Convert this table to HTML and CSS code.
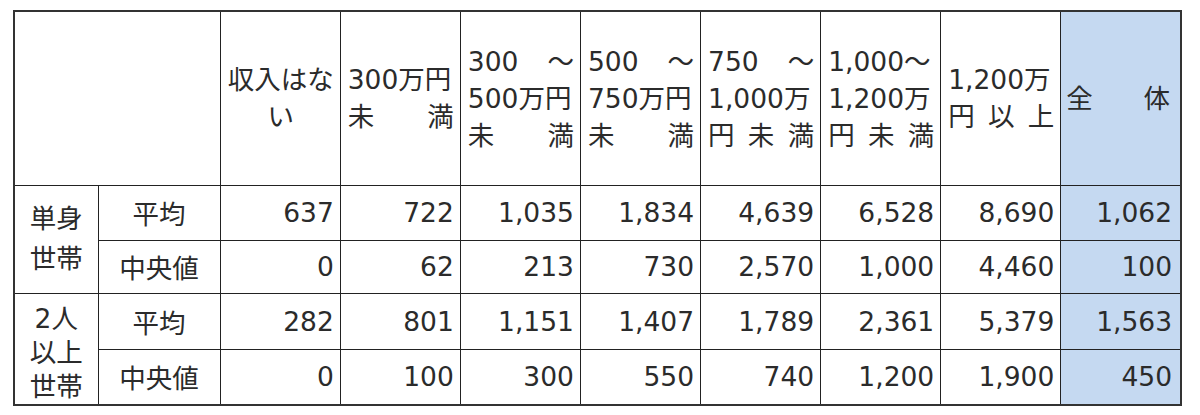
FILE: index.html
```html
<!DOCTYPE html>
<html lang="ja">
<head>
<meta charset="utf-8">
<link rel="stylesheet" href="styles.css">
</head>
<body>
<table class="tbl">
  <colgroup>
    <col class="c-rh"><col class="c-lb">
    <col class="c-d"><col class="c-d"><col class="c-d"><col class="c-d">
    <col class="c-d"><col class="c-d"><col class="c-d"><col class="c-d">
  </colgroup>
  <thead>
    <tr class="hrow">
      <th colspan="2" class="blank"></th>
      <th class="hc center"><div class="ln">収入はな</div><div class="ln">い</div></th>
      <th class="hc"><div class="ln dist"><span>300万円</span></div><div class="ln dist"><span>未</span><span>満</span></div></th>
      <th class="hc"><div class="ln dist"><span>300</span><span>～</span></div><div class="ln dist"><span>500万円</span></div><div class="ln dist"><span>未</span><span>満</span></div></th>
      <th class="hc"><div class="ln dist"><span>500</span><span>～</span></div><div class="ln dist"><span>750万円</span></div><div class="ln dist"><span>未</span><span>満</span></div></th>
      <th class="hc"><div class="ln dist"><span>750</span><span>～</span></div><div class="ln dist"><span>1,000万</span></div><div class="ln dist"><span>円</span><span>未</span><span>満</span></div></th>
      <th class="hc"><div class="ln dist"><span>1,000～</span></div><div class="ln dist"><span>1,200万</span></div><div class="ln dist"><span>円</span><span>未</span><span>満</span></div></th>
      <th class="hc"><div class="ln dist"><span>1,200万</span></div><div class="ln dist"><span>円</span><span>以</span><span>上</span></div></th>
      <th class="hc total last"><div class="ln dist"><span>全</span><span>体</span></div></th>
    </tr>
  </thead>
  <tbody>
    <tr class="r1">
      <th rowspan="2" class="rh rh2"><div>単身</div><div>世帯</div></th>
      <th class="lb">平均</th>
      <td>637</td><td>722</td><td>1,035</td><td>1,834</td><td>4,639</td><td>6,528</td><td>8,690</td><td class="total last">1,062</td>
    </tr>
    <tr class="r2">
      <th class="lb">中央値</th>
      <td>0</td><td>62</td><td>213</td><td>730</td><td>2,570</td><td>1,000</td><td>4,460</td><td class="total last">100</td>
    </tr>
    <tr class="r3">
      <th rowspan="2" class="rh rh3"><div>2人</div><div>以上</div><div>世帯</div></th>
      <th class="lb">平均</th>
      <td>282</td><td>801</td><td>1,151</td><td>1,407</td><td>1,789</td><td>2,361</td><td>5,379</td><td class="total last">1,563</td>
    </tr>
    <tr class="r4">
      <th class="lb">中央値</th>
      <td>0</td><td>100</td><td>300</td><td>550</td><td>740</td><td>1,200</td><td>1,900</td><td class="total last">450</td>
    </tr>
  </tbody>
</table>
</body>
</html>
```

FILE: styles.css
```css
html, body {
  margin: 0;
  padding: 0;
  background: #ffffff;
}

body {
  padding: 10px 0 0 13px;
  font-family: "DejaVu Sans", "Noto Sans CJK JP", sans-serif;
  font-size: 26.5px;
  color: #2b2b2b;
}

.tbl {
  border-collapse: collapse;
  table-layout: fixed;
  width: 1169px;
  border: 2px solid #333333;
}

.c-rh { width: 84px; }
.c-lb { width: 122px; }
.c-d { width: 120px; }

.tbl th,
.tbl td {
  border: 1px solid #222222;
  padding: 0;
  font-weight: normal;
  vertical-align: middle;
}

.hrow { height: 174px; }
.r1 { height: 55px; }
.r2 { height: 53px; }
.r3 { height: 55px; }
.r4 { height: 54px; }

.tbl .hc {
  padding: 0 6px 0 7px;
  line-height: 37px;
  text-align: left;
}

.tbl .hc.center {
  text-align: center;
}

.ln.dist {
  display: flex;
  justify-content: space-between;
}

.tbl .hc.last {
  padding: 0 10px 0 5px;
}

.tbl .total {
  background: #c5d9f1;
}

.tbl .rh {
  text-align: center;
}

.tbl .rh2 { line-height: 40px; }
.tbl .rh3 { line-height: 34px; padding-top: 8px; }

.tbl .lb {
  text-align: center;
}

.tbl td {
  text-align: right;
  padding-right: 6px;
}

.tbl td.last {
  padding-right: 8px;
}
```
